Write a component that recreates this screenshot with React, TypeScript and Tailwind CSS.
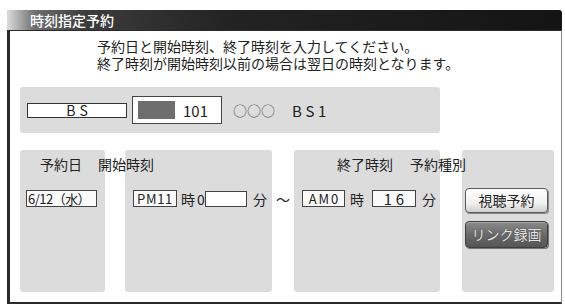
import React from "react";

const font = { fontFamily: '"Noto Sans CJK JP", "Noto Sans", sans-serif' };

function Box({ w, children, className = "" }: { w: string; children?: React.ReactNode; className?: string }) {
  return (
    <div
      className={`${w} h-[17px] border border-[#444] bg-[#fafafa] flex items-center justify-center text-[13px] leading-none text-[#222] whitespace-nowrap ${className}`}
    >
      {children}
    </div>
  );
}

export default function App() {
  return (
    <div className="w-[565px] h-[306px] bg-white pt-[10px] pl-[7px] pr-[3px] overflow-hidden" style={font}>
      {/* Title bar */}
      <div className="h-[20px] rounded-tr-[3px] bg-[linear-gradient(90deg,#dcdcdc_0%,#6e6e6e_5%,#3c3c3c_14%,#232323_40%,#141414_100%)] pl-[23px] flex items-center">
        <span className="text-white text-[14px] leading-none font-medium">時刻指定予約</span>
      </div>

      {/* Window */}
      <div className="h-[274px] border-l-[3px] border-t border-b-2 border-r border-[#2a2a2a] border-r-[#8a8a8a] bg-white">
        {/* Instructions */}
        <div className="pl-[87px] pt-[7px] text-[14px] leading-[17px] text-[#222]">
          <p>予約日と開始時刻、終了時刻を入力してください。</p>
          <p>終了時刻が開始時刻以前の場合は翌日の時刻となります。</p>
        </div>

        {/* Channel panel */}
        <div className="ml-[10px] mt-[15px] w-[420px] h-[46px] rounded-[3px] bg-[#dcdcdc] flex items-center">
          <div className="ml-[7px] w-[100px] h-[15px] border border-[#333] bg-white flex items-center justify-center text-[14px] leading-none tracking-[0.3em] pl-[0.3em] text-[#222]">
            BS
          </div>
          <div className="ml-[5px] w-[90px] h-[28px] border border-[#444] bg-white flex items-center">
            <div className="ml-[5px] w-[37px] h-[18px] bg-[#6e6e6e]" />
            <span className="ml-[8px] text-[15px] leading-none text-[#222]">101</span>
          </div>
          <span className="ml-[11px] text-[14px] leading-none text-[#555]">○○○</span>
          <span className="ml-[17px] text-[15px] leading-none tracking-[0.25em] text-[#222]">BS1</span>
        </div>

        {/* Reservation panels */}
        <div className="ml-[10px] mt-[17px] h-[142px] relative">
          <div className="flex h-full">
            <div className="w-[85px] rounded-[3px] bg-[#dcdcdc]" />
            <div className="ml-[20px] w-[147px] rounded-[3px] bg-[#dcdcdc]" />
            <div className="ml-[22px] w-[146px] rounded-[3px] bg-[#dcdcdc]" />
            <div className="ml-[22px] w-[92px] rounded-[3px] bg-[#dcdcdc] pt-[37px] pl-[3px]">
              <button className="w-[83px] h-[25px] rounded-[4px] border border-[#5a5a5a] bg-[linear-gradient(180deg,#ffffff_0%,#f2f2f2_60%,#cfcfcf_100%)] shadow-[1px_1px_0_#8a8a8a] text-[14px] leading-none text-[#222]">
                視聴予約
              </button>
              <button className="mt-[8px] w-[83px] h-[27px] rounded-[4px] border border-[#3e3e3e] bg-[linear-gradient(180deg,#8a8a8a_0%,#6a6a6a_50%,#555555_100%)] shadow-[inset_0_1px_0_#a8a8a8,1px_1px_0_#777] text-[14px] leading-none text-[#e4e4e4] [text-shadow:0_0_1px_#222]">
                リンク録画
              </button>
            </div>
          </div>

          {/* Labels and fields lying over the panels */}
          <div className="absolute inset-0 pt-[6px] text-[14px] leading-[16px] text-[#222]">
            <div className="flex h-[16px] whitespace-nowrap">
              <span className="ml-[20px]">予約日</span>
              <span className="ml-[16px]">開始時刻</span>
              <span className="ml-[183px]">終了時刻</span>
              <span className="ml-[17px]">予約種別</span>
            </div>
            <div className="mt-[18px] flex items-center h-[17px] whitespace-nowrap">
              <Box w="ml-[6px] w-[71px]" className="justify-start pl-[1px] text-[13px] tracking-[-0.04em]">6/12（水）</Box>
              <Box w="ml-[36px] w-[44px]" className="text-[12px] tracking-[0.05em]">PM11</Box>
              <span className="ml-[4px] w-[14px]">時</span>
              <span className="ml-[2px] w-[8px]">0</span>
              <div className="w-[42px] h-[16px] border border-[#444] bg-white" />
              <span className="ml-[6px]">分</span>
              <span className="ml-[9px]">～</span>
              <Box w="ml-[12px] w-[43px]" className="text-[12px] tracking-[0.15em] pl-[0.15em]">AM0</Box>
              <span className="ml-[5px]">時</span>
              <Box w="ml-[8px] w-[44px]" className="text-[15px] tracking-[0.25em] pl-[0.25em]">16</Box>
              <span className="ml-[6px]">分</span>
            </div>
          </div>
        </div>
      </div>
    </div>
  );
}
